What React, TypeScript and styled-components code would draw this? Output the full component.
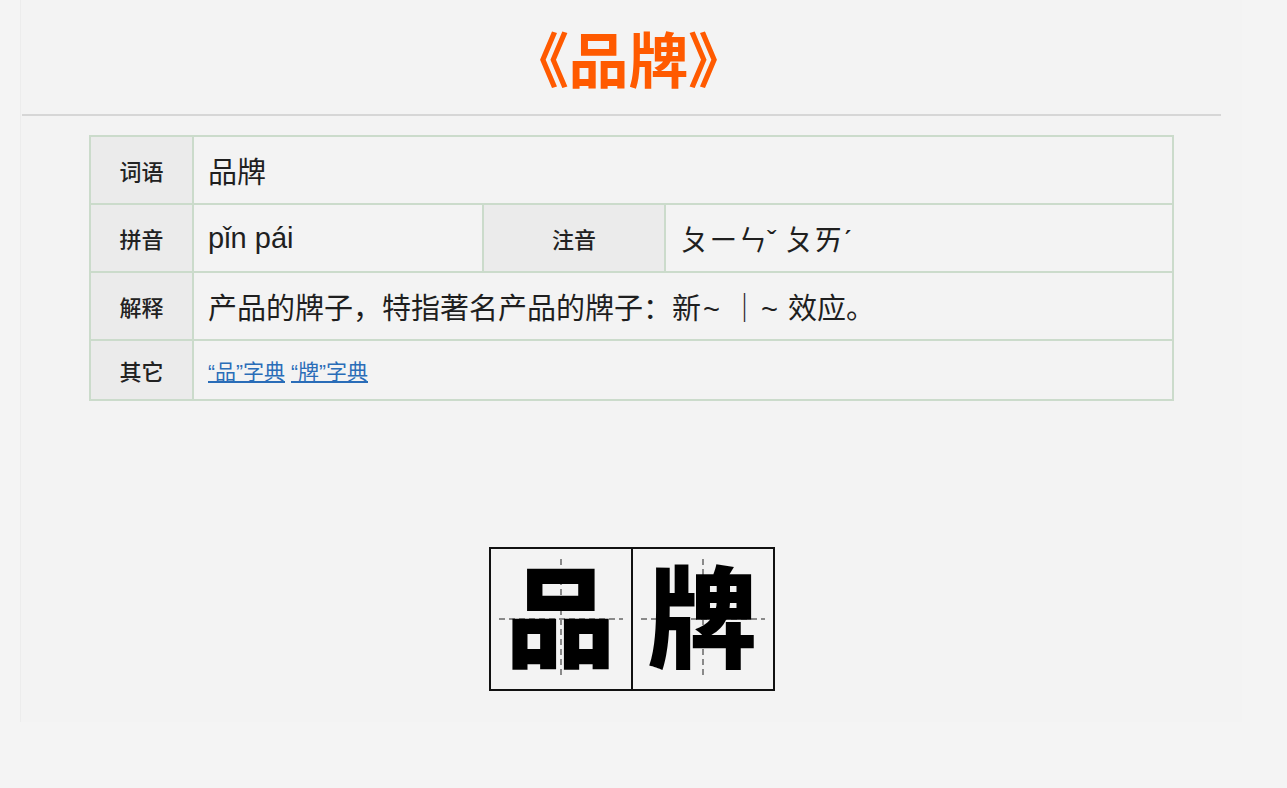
import styled, { createGlobalStyle } from "styled-components";

const GlobalStyle = createGlobalStyle`
  html, body {
    margin: 0;
    padding: 0;
    background: #f4f4f4;
  }
  body {
    font-family: "Liberation Sans", "Noto Sans CJK SC", sans-serif;
    color: #222;
  }
`;

const Page = styled.div`
  margin-left: 20px;
  width: 1221px;
  padding-bottom: 31px;
  background: #f3f3f3;
  border-left: 1px solid #ececec;
`;

const Title = styled.h1`
  margin: 0;
  height: 114px;
  padding-right: 6px;
  box-sizing: border-box;
  display: flex;
  align-items: center;
  justify-content: center;
  font-family: "Noto Sans CJK SC", sans-serif;
  font-size: 60px;
  font-weight: 700;
  line-height: 1;
  color: #ff5a00;
  font-feature-settings: "palt";
`;

const Rule = styled.hr`
  margin: 0 21px 0 1px;
  border: 0;
  height: 2px;
  background: #d6d6d6;
`;

const Table = styled.div`
  margin: 19px auto 0;
  width: 1085px;
  box-sizing: border-box;
  display: grid;
  grid-template-columns: 103px 290px 182px 508px;
  grid-template-rows: 68px 68px 68px 60px;
  border-top: 2px solid #cbdbcb;
  border-left: 2px solid #cbdbcb;
`;

const Label = styled.div`
  display: flex;
  align-items: center;
  justify-content: center;
  background: #ebebeb;
  border-right: 2px solid #cbdbcb;
  border-bottom: 2px solid #cbdbcb;
  font-size: 22px;
  font-weight: 500;
  color: #222;
`;

const Value = styled.div<{ $span?: number }>`
  grid-column: span ${p => p.$span ?? 1};
  display: flex;
  align-items: center;
  padding: 0 14px;
  border-right: 2px solid #cbdbcb;
  border-bottom: 2px solid #cbdbcb;
  font-size: 29px;
  color: #1f1f1f;
  gap: 6px;
`;

const Tilde = styled.span`
  display: inline-block;
  width: 29px;
  padding-left: 2px;
  box-sizing: border-box;
  font-family: "Liberation Sans", sans-serif;
`;

const DictLink = styled.a`
  font-size: 21px;
  color: #2a6db8;
  text-decoration: underline;
`;

const Board = styled.div`
  margin: 146px auto 0;
  width: fit-content;
  display: flex;
  border: 2px solid #111;
`;

const Cell = styled.div`
  position: relative;
  width: 140px;
  height: 140px;
  display: flex;
  align-items: center;
  justify-content: center;

  & + & {
    border-left: 2px solid #111;
  }

  &::before {
    content: "";
    position: absolute;
    left: 8px;
    right: 8px;
    top: 69px;
    height: 2px;
    background: repeating-linear-gradient(90deg, #8a8a8a 0 6px, transparent 6px 10px);
  }

  &::after {
    content: "";
    position: absolute;
    top: 10px;
    bottom: 10px;
    left: 69px;
    width: 2px;
    background: repeating-linear-gradient(180deg, #8a8a8a 0 6px, transparent 6px 10px);
  }
`;

const Glyph = styled.span`
  position: relative;
  z-index: 1;
  margin-bottom: 16px;
  font-family: "Noto Sans CJK SC", sans-serif;
  font-size: 110px;
  font-weight: 900;
  line-height: 1;
  color: #000;
`;

export default function App() {
  return (
    <>
      <GlobalStyle />
      <Page>
        <Title>《品牌》</Title>
        <Rule />
        <Table>
          <Label>词语</Label>
          <Value $span={3}>品牌</Value>

          <Label>拼音</Label>
          <Value>pǐn pái</Value>
          <Label>注音</Label>
          <Value>ㄆㄧㄣˇ ㄆㄞˊ</Value>

          <Label>解释</Label>
          <Value $span={3}>
            <span>
              产品的牌子，特指著名产品的牌子：新<Tilde>~</Tilde>｜<Tilde>~</Tilde>效应。
            </span>
          </Value>

          <Label>其它</Label>
          <Value $span={3}>
            <DictLink href="#">“品”字典</DictLink>
            <DictLink href="#">“牌”字典</DictLink>
          </Value>
        </Table>
        <Board>
          <Cell>
            <Glyph>品</Glyph>
          </Cell>
          <Cell>
            <Glyph>牌</Glyph>
          </Cell>
        </Board>
      </Page>
    </>
  );
}
